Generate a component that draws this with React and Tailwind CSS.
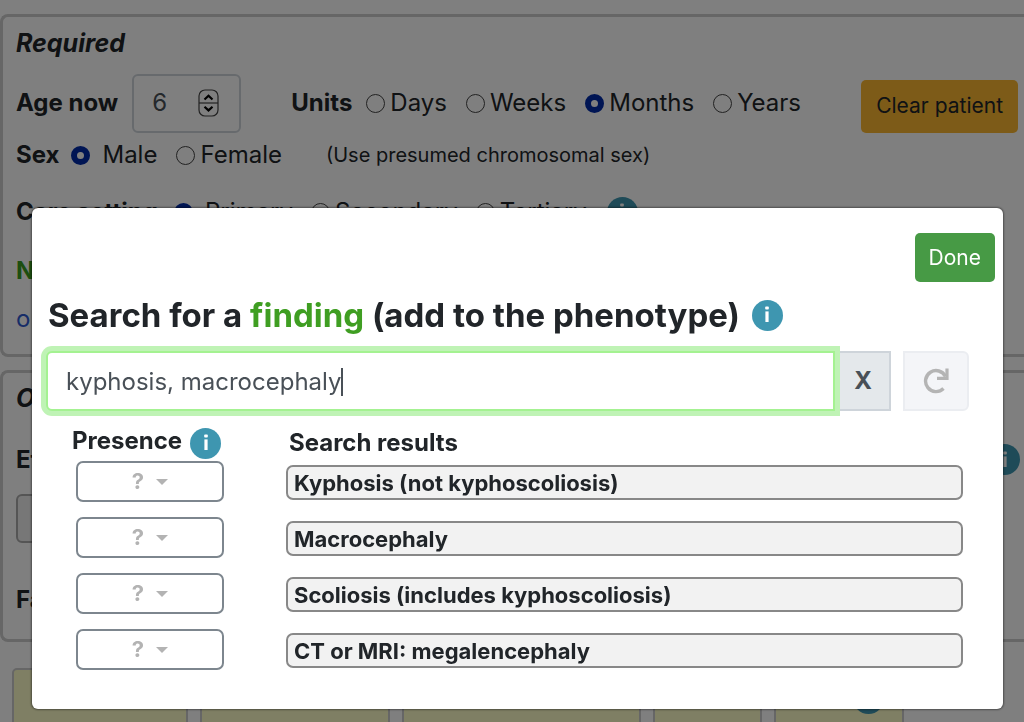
const units = ['Days', 'Weeks', 'Months', 'Years'];
const results = [
  'Kyphosis (not kyphoscoliosis)',
  'Macrocephaly',
  'Scoliosis (includes kyphoscoliosis)',
  'CT or MRI: megalencephaly',
];

function Radio({ name, label, gap = 'gap-[5px]', defaultChecked }) {
  return (
    <label className={`flex items-center ${gap}`}>
      <input
        type="radio"
        name={name}
        defaultChecked={defaultChecked}
        className="size-[19px] shrink-0 appearance-none rounded-full border border-[#444444] bg-white checked:border-6 checked:border-[#002ba8]"
      />
      {label}
    </label>
  );
}

function Info() {
  return (
    <button
      type="button"
      aria-label="More information"
      className="flex size-[31px] shrink-0 items-center justify-center rounded-full bg-[#3e96b0]"
    >
      <svg width="8" height="18" viewBox="0 0 8 18" fill="#fff" aria-hidden="true">
        <rect x="2.2" y="0.6" width="3.6" height="3" rx="0.8" />
        <rect x="2.4" y="5.4" width="3.2" height="10.6" />
      </svg>
    </button>
  );
}

function Patient() {
  return (
    <section className="rounded-l-lg border-3 border-r-0 border-[#cccccc] pr-[6px] pb-[17px] pl-[13px]">
      <h2 className="flex h-[53px] items-center text-[25px] font-bold italic">Required</h2>
      <div className="flex h-[66px] items-center">
        <label htmlFor="age" className="font-bold">Age now</label>
        <div className="ml-[14px] flex h-[59px] w-[109px] items-center justify-between rounded-md border-2 border-[#ced4da] pr-5 pl-[18px]">
          <input
            id="age"
            type="number"
            defaultValue="6"
            className="w-6 appearance-none text-[#495057] outline-none [-moz-appearance:textfield] [&::-webkit-inner-spin-button]:appearance-none"
          />
          <svg width="21" height="28" viewBox="0 0 21 28" fill="none" aria-hidden="true">
            <rect x="1" y="1" width="19" height="26" rx="6" stroke="#444" strokeWidth="1.2" />
            <path d="M1 14h19" stroke="#444" strokeWidth="1.2" />
            <path d="M6.5 10.5l4-3.7 4 3.7M6.5 17.7l4 3.7 4-3.7" stroke="#000" strokeWidth="2.2" />
          </svg>
        </div>
        <fieldset className="ml-[50px] flex items-center">
          <legend className="float-left mr-[14px] font-bold">Units</legend>
          <div className="flex items-center gap-[19px]">
            {units.map((unit) => (
              <Radio key={unit} name="unit" label={unit} defaultChecked={unit === 'Months'} />
            ))}
          </div>
        </fieldset>
        <button type="button" className="mt-[6px] ml-auto h-[53px] rounded-[5px] bg-[#fbb731] px-[15px] text-[21px] whitespace-nowrap">
          Clear patient
        </button>
      </div>
      <fieldset className="flex h-[38px] items-center">
        <legend className="float-left mr-3 font-bold">Sex</legend>
        <div className="flex items-center gap-[19px]">
          <Radio name="sex" label="Male" gap="gap-3" defaultChecked />
          <Radio name="sex" label="Female" />
        </div>
        <span className="ml-11 text-xl">(Use presumed chromosomal sex)</span>
      </fieldset>
      <div className="mt-[10px] flex h-14 items-center">
        <fieldset className="flex items-center">
          <legend className="float-left mr-4 font-bold">Care setting</legend>
          <div className="flex items-center gap-[18px]">
            <Radio name="care" label="Primary" gap="gap-3" defaultChecked />
            <Radio name="care" label="Secondary" />
            <Radio name="care" label="Tertiary" />
          </div>
        </fieldset>
        <div className="ml-5"><Info /></div>
      </div>
      <p className="flex h-[61px] items-center font-bold text-[#3b9c20]">No</p>
      <p className="flex h-9 items-center"><a href="#import" className="text-[#2f5bd0]">or</a></p>
    </section>
  );
}

function Optional() {
  return (
    <section className="mt-[13px] rounded-l-lg border-3 border-r-0 border-[#cccccc] pr-1 pb-[15px] pl-[13px]">
      <h2 className="flex h-[52px] items-center text-[25px] font-bold italic">Optional</h2>
      <div className="flex h-[69px] items-center justify-between">
        <label htmlFor="ethnicity" className="font-bold">Eth</label>
        <Info />
      </div>
      <input id="ethnicity" className="block h-[49px] w-60 rounded-md border-2 border-[#aaaaaa] bg-[#eeeeee]" />
      <p className="mt-8 flex h-[49px] items-center font-bold">Fam</p>
    </section>
  );
}

function Cards() {
  const card = 'h-20 rounded-[5px] border-2 border-[#cccccc] bg-[#ffffc8]';
  return (
    <div className="mt-[26px] flex gap-3 pl-3">
      <div className={`${card} w-[176px]`} />
      <div className={`${card} w-[190px]`} />
      <div className={`${card} w-[239px]`} />
      <div className={`${card} w-[109px]`} />
      <div className={`${card} flex w-[130px] items-start justify-end gap-2 pt-[13px] pr-[18px]`}>
        <span className="-mt-[6px] font-bold">Help</span>
        <Info />
      </div>
    </div>
  );
}

function FindingDialog() {
  return (
    <div role="dialog" aria-modal="true" aria-labelledby="dialog-title" className="mt-52 mr-[21px] ml-8 w-full rounded-md bg-white pt-[25px] pb-6 shadow-[0_0_2px_1px_rgba(0,0,0,0.4)]">
      <div className="flex justify-end pr-2">
        <button type="button" className="h-[49px] rounded-[5px] bg-[#479a45] px-[14px] text-[21px] text-white">Done</button>
      </div>
      <div className="mb-[3px] flex h-[66px] items-center gap-3 pl-4">
        <h1 id="dialog-title" className="text-[33px] font-bold whitespace-nowrap">
          Search for a <span className="text-[#3f9e22]">finding</span> (add to the phenotype)
        </h1>
        <Info />
      </div>
      <div className="flex h-[60px] pr-[34px] pl-[14px]">
        <label className="z-10 flex flex-1 items-center rounded-l-md border-2 border-[#a4f291] bg-white pt-[2px] pl-[18px] ring-5 ring-[#bff3b5]">
          <input
            aria-label="Search for a finding"
            defaultValue="kyphosis, macrocephaly"
            className="field-sizing-content text-[#495057] outline-none"
          />
          <span className="h-7 w-[2px] bg-[#495057]" />
        </label>
        <button type="button" aria-label="Clear search" className="w-14 border-2 border-[#ced4da] bg-[#e4e8eb] font-bold text-[#495057]">X</button>
        <button type="button" aria-label="Reset" disabled className="ml-3 flex w-[66px] items-center justify-center rounded-r-md border-2 border-[#ebedf1] bg-[#f4f5f8]">
          <svg width="26" height="26" viewBox="0 0 26 26" fill="none" stroke="#b4b4b4" aria-hidden="true">
            <path d="M20.5 20.5A10.5 10.5 0 1 1 22.5 8.5" strokeWidth="3.4" />
            <path d="M24 0.5V10.3H14" strokeWidth="3.2" />
          </svg>
        </button>
      </div>
      <table className="w-full table-fixed text-left">
        <thead>
          <tr className="h-[50px] align-bottom">
            <th className="w-[254px] p-0 pl-10">
              <div className="flex items-center gap-2">
                <span className="pb-1">Presence</span>
                <Info />
              </div>
            </th>
            <th className="p-0 pb-[2px] pl-[3px]">Search results</th>
          </tr>
        </thead>
        <tbody>
          {results.map((result) => (
            <tr key={result} className="h-14 align-top">
              <td className="p-0 pl-11">
                <div className="flex h-[41px] w-[148px] items-center justify-center gap-3 rounded-[7px] border-2 border-[#7d868e]">
                  <select aria-label={`Presence of ${result}`} className="field-sizing-content appearance-none text-[22px] font-bold text-[#b3b3b3] outline-none">
                    <option>?</option>
                    <option>Yes</option>
                    <option>No</option>
                  </select>
                  <svg width="12" height="6" viewBox="0 0 12 6" fill="#b3b3b3" aria-hidden="true"><path d="M0 0h12L6 6z" /></svg>
                </div>
              </td>
              <td className="p-0 pt-1 pr-10">
                <div className="flex h-[35px] items-center rounded-[7px] border-2 border-[#888888] bg-[#f2f2f2] pt-[2px] pl-[6px] text-[22px] font-bold">
                  {result}
                </div>
              </td>
            </tr>
          ))}
        </tbody>
      </table>
    </div>
  );
}

export default function App() {
  return (
    <div className="h-screen overflow-hidden bg-white font-['Inter','Liberation_Sans',sans-serif] text-2xl text-[#212529]">
      <main className="pt-[14px]">
        <Patient />
        <Optional />
        <Cards />
      </main>
      <div className="fixed inset-0 z-20 flex items-start overflow-hidden bg-black/50">
        <FindingDialog />
      </div>
    </div>
  );
}
